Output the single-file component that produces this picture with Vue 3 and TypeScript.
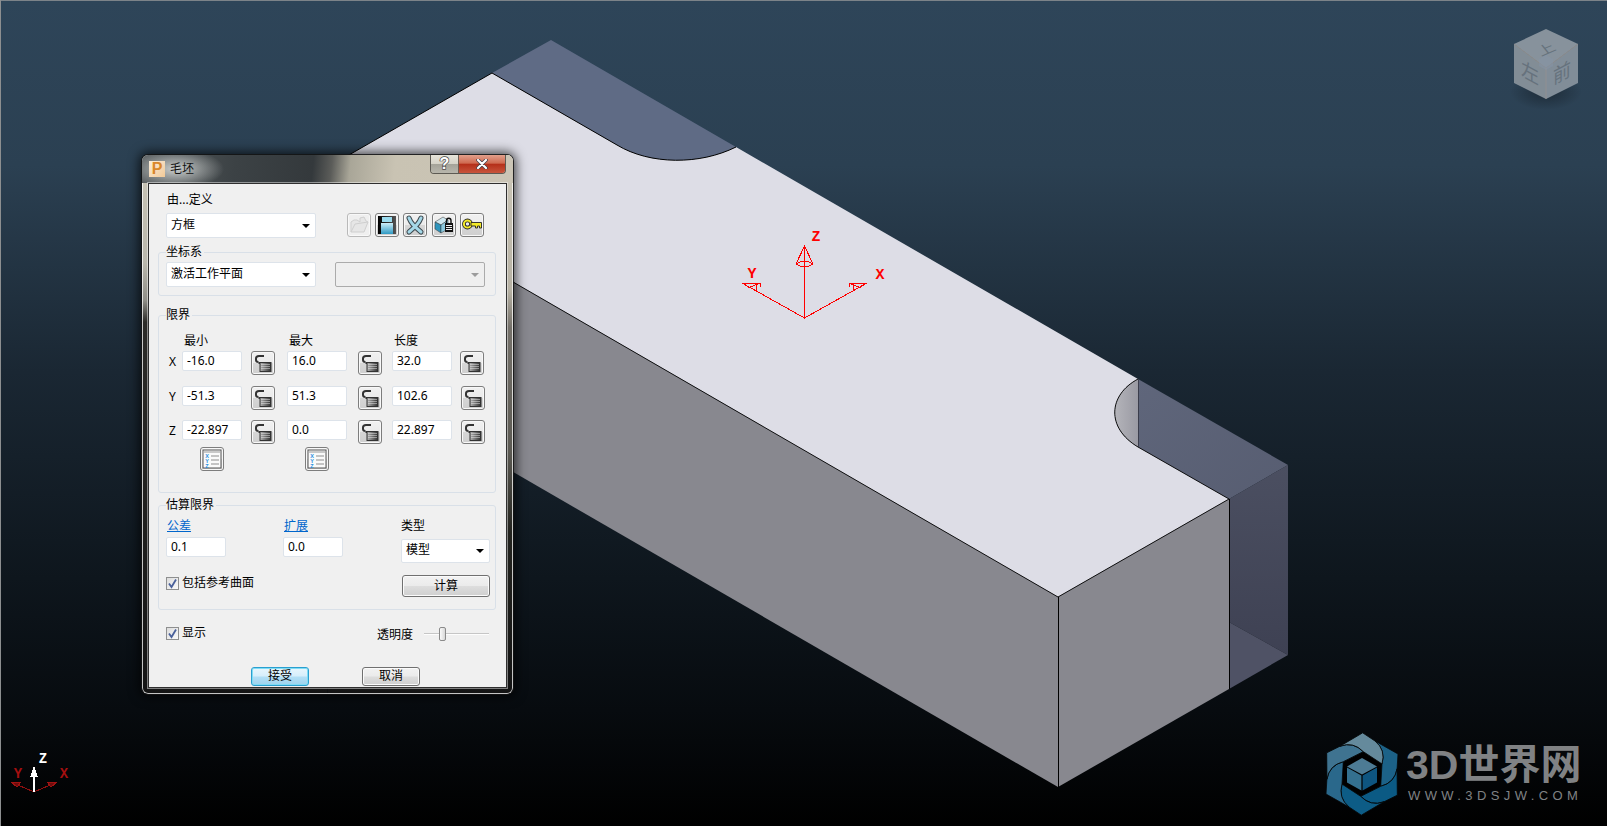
<script setup lang="ts">
interface LimitRow {
  axis: string
  min: string
  max: string
  len: string
  shift: boolean
}

const limitRows: LimitRow[] = [
  {axis: 'X', min: '-16.0', max: '16.0', len: '32.0', shift: false},
  {axis: 'Y', min: '-51.3', max: '51.3', len: '102.6', shift: true},
  {axis: 'Z', min: '-22.897', max: '0.0', len: '22.897', shift: true},
];

// six aperture blades of the watermark logo, top right first, clockwise
const bladeColors = ['#1c6288', '#0b5a84', '#0d5c86', '#2a688b', '#3f7390', '#658a9c'];
const blades = bladeColors.map((fill, i) => ({fill, angle: i * 60}));
const bladePath = 'M20 -10 Q24 -24 13 -33 L36 -20 L35.1 -5.2 Q32.8 8.8 18.7 12.3 Z';
</script>

<template>
  <div class="stage">
    <svg class="scene" width="1609" height="828" viewBox="0 0 1609 828">
      <defs>
        <linearGradient id="bg" x1="0" y1="0" x2="0" y2="1">
          <stop offset="0" stop-color="#2e4559"/>
          <stop offset="0.2" stop-color="#2b4052"/>
          <stop offset="0.45" stop-color="#1a2733"/>
          <stop offset="0.7" stop-color="#0e161d"/>
          <stop offset="0.86" stop-color="#070b0f"/>
          <stop offset="1" stop-color="#000"/>
        </linearGradient>
        <linearGradient id="wall" x1="0" y1="0" x2="0" y2="1">
          <stop offset="0" stop-color="#4b4f61"/>
          <stop offset="1" stop-color="#3e4153"/>
        </linearGradient>
        <linearGradient id="notch" x1="0" y1="0" x2="1" y2="1">
          <stop offset="0" stop-color="#5f667b"/>
          <stop offset="1" stop-color="#575d71"/>
        </linearGradient>
        <linearGradient id="arcWall" x1="0" y1="0" x2="1" y2="0">
          <stop offset="0" stop-color="#b4b4ba"/>
          <stop offset="1" stop-color="#9a9aa3"/>
        </linearGradient>
        <radialGradient id="cubeShadow">
          <stop offset="0" stop-color="#000" stop-opacity="0.35"/>
          <stop offset="1" stop-color="#000" stop-opacity="0"/>
        </radialGradient>
      </defs>

      <rect x="0" y="0" width="1607" height="826" fill="url(#bg)"/>
      <rect x="0" y="0" width="1607" height="1" fill="#7c8389"/>
      <rect x="0" y="0" width="1" height="826" fill="#8d8f90"/>

      <!-- model -->
      <path d="M492 73 L551 40 L736 147 C700 165 650 165 617 145 Z" fill="#5f6b85"/>
      <polygon points="1138,379 1288,465 1229,499 1138,447" fill="url(#notch)"/>
      <polygon points="1229,499 1288,465 1288,655 1229,622" fill="url(#wall)"/>
      <polygon points="1229,622 1288,655 1229,689" fill="#4f5265"/>
      <polygon points="321,171 1058,597 1058,787 321,361" fill="#88888f"/>
      <polygon points="1058,597 1229,499 1229,689 1058,787" fill="#88888f"/>
      <path
        d="M321 171 L492 73 L617 145 C650 165 700 165 736 147 L1138 379 C1108 395 1106 428 1138 447 L1229 499 L1058 597 Z"
        fill="#dddde6"
      />
      <path d="M1138 379 C1108 395 1106 428 1138 447 Z" fill="url(#arcWall)"/>
      <g fill="none" stroke="#000" stroke-width="1">
        <path d="M321 171 L492 73 L617 145 C650 165 700 165 736 147"/>
        <path d="M1138 379 C1108 395 1106 428 1138 447 L1229 499 L1058 597 L321 171" stroke-width="0.9"/>
        <path d="M1058.5 597 V787 M1229.5 499 V689"/>
        <path d="M1138.5 379 V447" stroke="#3b3d4c"/>
      </g>

      <!-- work plane triad -->
      <g class="crisp" fill="none" stroke="#f00" stroke-width="1">
        <path d="M804.5 246 V318 L742 283 M804.5 318 L867 283"/>
        <path d="M804.5 246 L796 264 Q804.5 270 813 264 Z M796 264 Q804.5 258 813 264"/>
        <path d="M742 283 H760 L748 288 M756 283 V291 M760 283 V287"/>
        <path d="M867 283 H849 L861 288 M853 283 V291 M849 283 V287"/>
      </g>
      <text class="triad" x="816" y="241" text-anchor="middle" fill="#f00">Z</text>
      <text class="triad" x="752" y="278" text-anchor="middle" fill="#f00">Y</text>
      <text class="triad" x="880" y="279" text-anchor="middle" fill="#f00">X</text>

      <!-- global triad -->
      <g class="crisp" fill="none">
        <path d="M34 792 L11 782 M34 792 L57 782" stroke="#8e0e0e" stroke-width="1"/>
        <path d="M34 792 V770" stroke="#fff" stroke-width="2"/>
        <path d="M34 767 L31 776 H37 Z" fill="#fff" stroke="#fff"/>
        <path d="M11 782 H21 L17 787 Z M57 782 H47 L51 787 Z" fill="#6e0c0c" stroke="#a01212"/>
      </g>
      <text class="triad small" x="43" y="763" text-anchor="middle" fill="#fff">Z</text>
      <text class="triad small" x="18" y="778" text-anchor="middle" fill="#a50f0f">Y</text>
      <text class="triad small" x="64" y="778" text-anchor="middle" fill="#a50f0f">X</text>

      <!-- view cube -->
      <ellipse cx="1546" cy="92" rx="36" ry="18" fill="url(#cubeShadow)"/>
      <polygon points="1546,29 1578,44 1546,68 1514,44" fill="#87929c"/>
      <polygon points="1514,44 1546,68 1546,99 1514,83" fill="#828d96"/>
      <polygon points="1578,44 1546,68 1546,99 1578,83" fill="#818d98"/>
      <path d="M1514 44 L1546 68 L1578 44 M1546 68 V99" fill="none" stroke="#99938f" stroke-width="0.7"/>
      <polygon points="1546,55 1553,59 1553,66 1546,70 1539,66 1539,59" fill="#8694a8" opacity="0.45"/>
      <text class="cubeText" transform="matrix(.8 -.35 .4 .5 1549 53)" text-anchor="middle">上</text>
      <text class="cubeText" transform="matrix(.9 .48 0 1 1530 80)" text-anchor="middle">左</text>
      <text class="cubeText" transform="matrix(.9 -.48 0 1 1562 80)" text-anchor="middle">前</text>

      <!-- watermark logo -->
      <g transform="translate(1362 774)">
        <polygon points="0,-40.5 36,-20 36,20 0,40.5 -36,20 -36,-20" fill="#000"/>
        <path
          v-for="blade in blades"
          :key="blade.angle"
          :d="bladePath"
          :fill="blade.fill"
          :transform="`rotate(${blade.angle})`"
          stroke="#050809"
          stroke-width="0.8"
        />
        <polygon points="0,-21 18.5,-10.5 18.5,10.5 0,21 -18.5,10.5 -18.5,-10.5" fill="#000"/>
        <polygon points="0,-16 15,-7.5 0,0.5 -15,-7.5" fill="#4d7b94"/>
        <polygon points="-15,-6.5 -0.6,1.5 -0.6,16.5 -15,8.5" fill="#34708f"/>
        <polygon points="15,-6.5 0.6,1.5 0.6,16.5 15,8.5" fill="#0e5580"/>
      </g>
    </svg>

    <div class="watermark">
      <div class="wmTitle">3D世界网</div>
      <div class="wmUrl">WWW.3DSJW.COM</div>
    </div>

    <section class="dialog">
      <header class="titleBar">
        <span class="appIcon">P</span>
        <span class="titleText">毛坯</span>
        <div class="winButtons">
          <span class="winHelp">?</span>
          <span class="winClose">
            <svg width="14" height="10" viewBox="0 0 14 10">
              <path d="M3 1 L11 9 M11 1 L3 9" stroke="#3f3f4a" stroke-width="3.6" stroke-linecap="round"/>
              <path d="M3 1 L11 9 M11 1 L3 9" stroke="#fff" stroke-width="2.2" stroke-linecap="round"/>
            </svg>
          </span>
        </div>
      </header>

      <div class="client">
        <div class="defineLabel">由...定义</div>
        <div class="defineRow">
          <div class="combo wide"><span>方框</span><i class="arrow"/></div>
          <div class="tools">
            <button class="iconBtn off" type="button" aria-label="打开">
              <svg width="22" height="22" viewBox="0 0 22 22">
                <path d="M3 18 L3 8 L6 6 L9 6 L12 8 L12 4 L16 3 L18 7 L20 8 L16 18 Z" fill="#e6e6e6" stroke="#cfcfcf"/>
                <path d="M3 18 L7 10 L20 8" fill="none" stroke="#cfcfcf"/>
              </svg>
            </button>
            <button class="iconBtn" type="button" aria-label="保存">
              <svg width="22" height="22" viewBox="0 0 22 22">
                <defs>
                  <linearGradient id="floppy" x1="0" y1="0" x2="0" y2="1">
                    <stop offset="0" stop-color="#cdeef8"/>
                    <stop offset="1" stop-color="#2f9ac4"/>
                  </linearGradient>
                  <linearGradient id="floppyEdge" x1="0" y1="0" x2="1" y2="0">
                    <stop offset="0" stop-color="#000"/>
                    <stop offset="1" stop-color="#555"/>
                  </linearGradient>
                </defs>
                <rect x="2" y="2" width="18" height="18" fill="url(#floppyEdge)"/>
                <rect x="6" y="3" width="10" height="5" fill="#9adbee"/>
                <rect x="5" y="9" width="12" height="11" fill="url(#floppy)"/>
              </svg>
            </button>
            <button class="iconBtn" type="button" aria-label="重置">
              <svg width="22" height="22" viewBox="0 0 22 22">
                <g fill="none" stroke-linecap="round">
                  <path d="M5 4 C7 9 9 11 17 18 M17 4 C15 9 13 11 5 18" stroke="#3f4a50" stroke-width="5"/>
                  <path d="M5 4 C7 9 9 11 17 18 M17 4 C15 9 13 11 5 18" stroke="#a5d8e8" stroke-width="3"/>
                </g>
              </svg>
            </button>
            <button class="iconBtn" type="button" aria-label="锁定毛坯">
              <svg width="22" height="22" viewBox="0 0 22 22">
                <polygon points="2,8 10,3 15,6 8,11" fill="#cfe8f0" stroke="#333" stroke-width="0.5"/>
                <polygon points="2,8 8,11 8,19 2,15" fill="#2e95bd" stroke="#333" stroke-width="0.5"/>
                <polygon points="8,11 15,6 15,15 8,19" fill="#8cc9de" stroke="#333" stroke-width="0.5"/>
                <path d="M13.5 9 V6.5 C13.5 3.5 18 3.5 18 6.5 V9" fill="none" stroke="#111" stroke-width="1.4"/>
                <rect x="12" y="9" width="8" height="9" fill="#111"/>
                <path d="M13 11.5 H19 M13 13.5 H19 M13 15.5 H19" stroke="#eee" stroke-width="1"/>
              </svg>
            </button>
            <button class="iconBtn" type="button" aria-label="密钥">
              <svg width="22" height="22" viewBox="0 0 22 22">
                <circle cx="6.5" cy="10" r="3.6" fill="none" stroke="#222" stroke-width="3.6"/>
                <circle cx="6.5" cy="10" r="3.6" fill="none" stroke="#f4ea2a" stroke-width="2"/>
                <path d="M10 8.5 H20.5 V14 H18.5 V12 H16.5 V14 H14.5 V12 H10 Z" fill="#f4ea2a" stroke="#222" stroke-width="0.9"/>
              </svg>
            </button>
          </div>
        </div>

        <div class="group csGroup">
          <div class="legend">坐标系</div>
          <div class="csRow">
            <div class="combo wide"><span>激活工作平面</span><i class="arrow"/></div>
            <div class="combo wide disabled"><i class="arrow"/></div>
          </div>
        </div>

        <div class="group limitGroup">
          <div class="legend">限界</div>
          <div class="limitGrid">
            <span/>
            <span class="head">最小</span>
            <span/>
            <span class="head">最大</span>
            <span/>
            <span class="head">长度</span>
            <span/>
            <template v-for="row in limitRows" :key="row.axis">
              <span class="axis">{{ row.axis }}</span>
              <input class="field" :value="row.min" readonly>
              <button class="iconBtn lockA" type="button" aria-label="锁定">
                <svg width="22" height="22" viewBox="0 0 22 22">
                  <use href="#lockGlyph"/>
                </svg>
              </button>
              <input class="field" :value="row.max" readonly>
              <button class="iconBtn lockB" type="button" aria-label="锁定">
                <svg width="22" height="22" viewBox="0 0 22 22">
                  <use href="#lockGlyph"/>
                </svg>
              </button>
              <input class="field" :value="row.len" readonly>
              <button class="iconBtn lockC" :class="{shift: row.shift}" type="button" aria-label="锁定">
                <svg width="22" height="22" viewBox="0 0 22 22">
                  <use href="#lockGlyph"/>
                </svg>
              </button>
            </template>
            <span/>
            <button class="iconBtn xyzBtn" type="button" aria-label="坐标">
              <svg width="22" height="22" viewBox="0 0 22 22">
                <use href="#xyzGlyph"/>
              </svg>
            </button>
            <span/>
            <button class="iconBtn xyzBtn" type="button" aria-label="坐标">
              <svg width="22" height="22" viewBox="0 0 22 22">
                <use href="#xyzGlyph"/>
              </svg>
            </button>
          </div>
        </div>

        <div class="group estGroup">
          <div class="legend">估算限界</div>
          <div class="estGrid">
            <a class="link">公差</a>
            <a class="link">扩展</a>
            <span>类型</span>
            <input class="field small" value="0.1" readonly>
            <input class="field small" value="0.0" readonly>
            <div class="combo typeCombo"><span>模型</span><i class="arrow"/></div>
            <label class="check span2">
              <span class="box">
                <svg width="11" height="11" viewBox="0 0 11 11">
                  <path d="M2 5.5 L4.5 9 L9 1.5" fill="none" stroke="#49609a" stroke-width="1.8"/>
                </svg>
              </span>
              <span class="checkText">包括参考曲面</span>
            </label>
            <button class="push calc" type="button">计算</button>
          </div>
        </div>

        <div class="showRow">
          <label class="check">
            <span class="box">
              <svg width="11" height="11" viewBox="0 0 11 11">
                <path d="M2 5.5 L4.5 9 L9 1.5" fill="none" stroke="#49609a" stroke-width="1.8"/>
              </svg>
            </span>
            <span class="checkText">显示</span>
          </label>
          <span class="opacityLabel">透明度</span>
          <div class="slider"><span class="thumb"/></div>
        </div>

        <div class="actions">
          <button class="push accept" type="button">接受</button>
          <button class="push" type="button">取消</button>
        </div>
      </div>
    </section>

    <svg class="defsOnly" width="0" height="0">
      <defs>
        <linearGradient id="lockBody" x1="0" y1="0" x2="1" y2="0">
          <stop offset="0" stop-color="#b5b5b5"/>
          <stop offset="1" stop-color="#2e2e2e"/>
        </linearGradient>
        <g id="lockGlyph">
          <path d="M12 4 H7 C5 4 4 5 4 6.5 V8 C4 9.5 5 10 6.5 10" fill="none" stroke="#333" stroke-width="2"/>
          <path d="M7.5 10 V12" stroke="#333" stroke-width="2"/>
          <rect x="8" y="10.5" width="11" height="9" fill="url(#lockBody)" stroke="#333" stroke-width="1"/>
          <path d="M9 12.5 H18 M9 14.5 H18 M9 16.5 H18" stroke="#e8e8e8" stroke-width="0.5"/>
        </g>
        <g id="xyzGlyph">
          <rect x="2" y="2" width="18" height="18" fill="#fafafa" stroke="#555" stroke-width="1"/>
          <rect x="3" y="3" width="16" height="2" fill="#c9c9c9"/>
          <path d="M10 8 H18 M10 12 H18 M10 16 H18" stroke="#c4c4c4" stroke-width="2"/>
          <text x="6" y="10" class="xyzLetter">X</text>
          <text x="6" y="15" class="xyzLetter">Y</text>
          <text x="6" y="20" class="xyzLetter">Z</text>
        </g>
      </defs>
    </svg>
  </div>
</template>

<style>
html, body {
  margin: 0;
  background: #fff;
  overflow: hidden;
}
</style>

<style scoped>
.stage {
  position: relative;
  width: 1609px;
  height: 828px;
  overflow: hidden;
  background: #fff;
  font-family: "Noto Sans", "Noto Sans CJK SC", sans-serif;
  font-size: 12px;
  color: #000;
}

.scene {
  display: block;
}

.defsOnly {
  position: absolute;
}

.crisp {
  shape-rendering: crispEdges;
}

.triad {
  font-family: "Liberation Mono", monospace;
  font-weight: 700;
  font-size: 15px;
}

.triad.small {
  font-size: 14px;
}

.cubeText {
  font-family: "Noto Sans CJK SC", sans-serif;
  font-size: 20px;
  fill: #66727d;
}

.xyzLetter {
  font-family: "Liberation Sans", sans-serif;
  font-weight: 700;
  font-size: 5.5px;
  fill: #2a8fe0;
  text-anchor: middle;
}

/* watermark */
.watermark {
  position: absolute;
  left: 1406px;
  top: 741px;
  width: 178px;
  color: #808284;
}

.wmTitle {
  font-family: "Liberation Sans", "Noto Sans CJK SC", sans-serif;
  font-weight: 700;
  font-size: 41px;
  line-height: 48px;
  white-space: nowrap;
}

.wmUrl {
  font-family: "Liberation Sans", sans-serif;
  font-size: 13px;
  line-height: 14px;
  letter-spacing: 4.4px;
  white-space: nowrap;
  padding-left: 2px;
}

/* dialog window */
.dialog {
  position: absolute;
  left: 142px;
  top: 155px;
  width: 371px;
  height: 539px;
  box-sizing: border-box;
  padding: 0 6px;
  border-radius: 6px;
  background:
    linear-gradient(#cbc6b7 0, #b9b7ac 20%, #8f8e87 27%, #2c2b28 31%, #141414 100%) left / 50% 100% no-repeat,
    linear-gradient(#cbc6b7 0, #b7b2a4 25%, #75716a 32%, #5c5a53 55%, #24241f 70%, #141414 100%) right / 50% 100% no-repeat;
  box-shadow:
    0 0 0 1px rgba(20, 20, 20, 0.85),
    inset 0 0 0 1px rgba(255, 255, 255, 0.75),
    0 0 11px 3px rgba(0, 0, 0, 0.7);
}

.titleBar {
  display: flex;
  align-items: flex-start;
  height: 28px;
  margin: 0 -6px;
  padding: 6px 7px 0;
  box-sizing: border-box;
  border-radius: 6px 6px 0 0;
  background:
    radial-gradient(ellipse 48px 20px at 34px 14px, rgba(225, 228, 226, 0.85), rgba(225, 228, 226, 0) 100%),
    linear-gradient(96deg, #565b5d 0, #3c4245 25%, #34393c 46%, #5b5c59 51%, #a9a698 56%, #c9c3b3 68%, #cbc5b6 100%);
}

.appIcon {
  width: 16px;
  height: 16px;
  flex: none;
  text-align: center;
  font: 700 16px/16px "Liberation Sans", sans-serif;
  color: #d9872a;
  background: linear-gradient(135deg, #fbeedc, #f2c997);
}

.titleText {
  margin: 1px 0 0 5px;
  line-height: 14px;
  color: #111;
}

.winButtons {
  display: flex;
  margin: -6px 0 0 auto;
  height: 19px;
  box-sizing: border-box;
  border: 1px solid #5d5a53;
  border-top: 0;
  border-radius: 0 0 4px 4px;
  overflow: hidden;
}

.winHelp,
.winClose {
  display: flex;
  align-items: center;
  justify-content: center;
}

.winHelp {
  width: 27px;
  font: 700 16px/18px "Liberation Sans", sans-serif;
  color: #fff;
  -webkit-text-stroke: 1.4px #4a4a4a;
  paint-order: stroke fill;
  background: linear-gradient(#e7e4da 0, #d6d3c8 48%, #a5a399 52%, #b8b6ac 100%);
  border-right: 1px solid #6d5a50;
}

.winClose {
  width: 46px;
  background: linear-gradient(#e2a08c 0, #cf6a50 45%, #b5301a 52%, #c8553c 100%);
}

.client {
  height: 505px;
  box-sizing: border-box;
  border: 1px solid #2f2f2f;
  background: #f0f0f0;
  box-shadow: 0 0 0 1px rgba(255, 255, 255, 0.45);
  overflow: hidden;
}

.defineLabel {
  margin: 8px 0 0 18px;
  height: 16px;
  line-height: 16px;
}

.defineRow {
  display: flex;
  margin: 5px 0 0 17px;
}

.tools {
  display: flex;
  gap: 4px;
  margin-left: 31px;
}

.tools .iconBtn:nth-child(4) {
  margin-left: 1px;
}

.combo {
  display: flex;
  align-items: center;
  justify-content: space-between;
  height: 25px;
  box-sizing: border-box;
  padding: 0 5px 3px 4px;
  border: 1px solid #dde3ea;
  border-radius: 2px;
  background: #fff;
}

.combo.wide {
  width: 150px;
}

.arrow {
  width: 0;
  height: 0;
  margin: 3px 0 0 auto;
  border-left: 4px solid transparent;
  border-right: 4px solid transparent;
  border-top: 4px solid #000;
}

.combo.disabled {
  background: #efefef;
  border-color: #ababab;
}

.combo.disabled .arrow {
  border-top-color: #9c9c9c;
}

.iconBtn {
  display: block;
  width: 24px;
  height: 24px;
  padding: 0;
  box-sizing: border-box;
  border: 1px solid #7d7d7d;
  border-radius: 3px;
  background: linear-gradient(#f1f1f1 0, #ebebeb 48%, #d6d6d6 52%, #cfcfcf 100%);
  box-shadow: inset 0 0 0 1px #f8f8f8;
}

.iconBtn svg {
  display: block;
}

.iconBtn.off {
  border-color: #b9b9b9;
  background: #efefef;
}

.group {
  margin-left: 9px;
  width: 338px;
  box-sizing: border-box;
  border: 1px solid #d9e0e8;
  border-radius: 3px;
  padding: 0 7px;
}

.legend {
  width: fit-content;
  height: 16px;
  margin-top: -8px;
  line-height: 14px;
  background: #f0f0f0;
  padding-right: 2px;
}

.csGroup {
  height: 44px;
  margin-top: 14px;
}

.csRow {
  display: flex;
  gap: 19px;
  margin-top: 1px;
}

.limitGroup {
  height: 178px;
  margin-top: 19px;
}

.limitGrid {
  display: grid;
  grid-template-columns: 16px 60px 45px 60px 45px 60px 33px;
  grid-template-rows: 18px 35px 34px 27px 24px;
  justify-items: start;
  align-items: start;
  margin-top: 9px;
}

.head {
  line-height: 16px;
  padding-left: 2px;
}

.axis {
  line-height: 22px;
  padding-left: 3px;
}

.field {
  display: block;
  width: 60px;
  height: 20px;
  box-sizing: border-box;
  padding: 0 0 1px 4px;
  border: 1px solid #dde3ea;
  border-radius: 2px;
  outline: 0;
  background: #fff;
  color: #000;
  font: inherit;
}

.lockA {
  margin-left: 9px;
}

.lockB {
  margin-left: 11px;
}

.lockC {
  margin-left: 8px;
}

.lockC.shift {
  margin-left: 9px;
}

.xyzBtn {
  margin-left: 18px;
}

.estGroup {
  height: 105px;
  margin-top: 12px;
}

.estGrid {
  display: grid;
  grid-template-columns: 117px 118px 89px;
  grid-template-rows: 18px 38px 22px;
  justify-items: start;
  align-items: start;
  margin-top: 5px;
  line-height: 13px;
}

.link {
  padding-left: 1px;
  color: #0066cc;
  text-decoration: underline;
}

.typeCombo {
  width: 89px;
  height: 24px;
  margin-top: 2px;
}

.check {
  display: flex;
  align-items: center;
  gap: 3px;
  line-height: 13px;
}

.checkText {
  margin-top: -2px;
}

.span2 {
  grid-column: 1 / span 2;
  margin-top: 2px;
}

.box {
  display: block;
  width: 13px;
  height: 13px;
  box-sizing: border-box;
  padding: 0;
  border: 1px solid #8e8f8f;
  background: linear-gradient(135deg, #dcdcdc, #fafafa);
}

.box svg {
  display: block;
}

.showRow {
  display: flex;
  align-items: flex-start;
  width: 323px;
  margin: 17px 0 0 17px;
}

.opacityLabel {
  margin: 0 11px 0 auto;
  line-height: 16px;
}

.slider {
  position: relative;
  width: 65px;
  height: 14px;
  background: linear-gradient(#f0f0f0 6px, #c6c6c6 6px, #c6c6c6 7px, #fdfdfd 7px, #fdfdfd 8px, #f0f0f0 8px);
}

.thumb {
  position: absolute;
  left: 15px;
  top: 0;
  width: 7px;
  height: 14px;
  box-sizing: border-box;
  border: 1px solid #8a8a8a;
  border-radius: 2px;
  background: linear-gradient(90deg, #fafafa, #d8d8d8);
}

.actions {
  display: flex;
  gap: 53px;
  margin: 24px 0 0 102px;
}

.push {
  display: block;
  width: 58px;
  height: 19px;
  padding: 0 0 2px;
  box-sizing: border-box;
  border: 1px solid #707070;
  border-radius: 3px;
  background: linear-gradient(#f2f2f2 0, #ebebeb 48%, #dddddd 52%, #cfcfcf 100%);
  box-shadow: inset 0 0 0 1px #fbfbfb;
  color: #000;
  font: inherit;
  line-height: 13px;
}

.calc {
  width: 88px;
  height: 22px;
  margin: 0 0 0 1px;
}

.accept {
  border-color: #2a9fd0;
  background: linear-gradient(#e8f6fd 0, #d6eefb 48%, #b2dff6 52%, #9ed3ee 100%);
  box-shadow: inset 0 0 0 1px #7fdcf5;
}
</style>
